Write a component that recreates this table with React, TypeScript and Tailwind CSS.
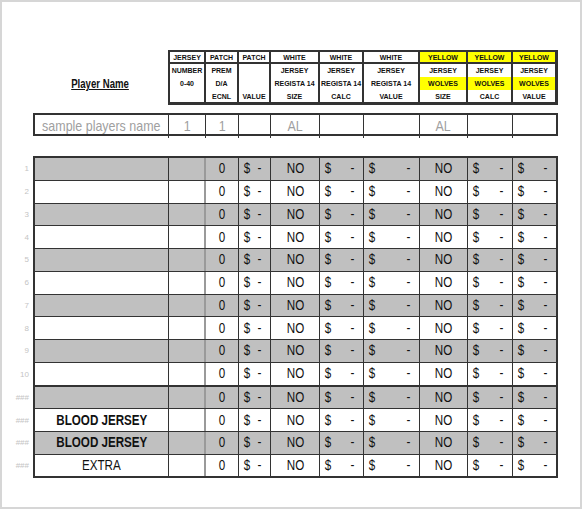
import React from "react";

const sans = "font-['Liberation_Sans',Arial,sans-serif]";
const gridCols = "grid grid-cols-[134px_37px_33px_32px_49px_44px_56px_48px_45px_43px]";
const headCols = "grid grid-cols-[36px_33px_32px_49px_44px_56px_48px_45px_42px]";

type Head = { top: string; lines: [string, string, string]; yellow?: boolean };

const heads: Head[] = [
  { top: "JERSEY", lines: ["NUMBER", "0-40", ""] },
  { top: "PATCH", lines: ["PREM", "D/A", "ECNL"] },
  { top: "PATCH", lines: ["", "", "VALUE"] },
  { top: "WHITE", lines: ["JERSEY", "REGISTA 14", "SIZE"] },
  { top: "WHITE", lines: ["JERSEY", "REGISTA 14", "CALC"] },
  { top: "WHITE", lines: ["JERSEY", "REGISTA 14", "VALUE"] },
  { top: "YELLOW", lines: ["JERSEY", "WOLVES", "SIZE"], yellow: true },
  { top: "YELLOW", lines: ["JERSEY", "WOLVES", "CALC"], yellow: true },
  { top: "YELLOW", lines: ["JERSEY", "WOLVES", "VALUE"], yellow: true },
];

const rows = [
  { label: "1", name: "" },
  { label: "2", name: "" },
  { label: "3", name: "" },
  { label: "4", name: "" },
  { label: "5", name: "" },
  { label: "6", name: "" },
  { label: "7", name: "" },
  { label: "8", name: "" },
  { label: "9", name: "" },
  { label: "10", name: "" },
  { label: "###", name: "" },
  { label: "###", name: "BLOOD JERSEY", bold: true },
  { label: "###", name: "BLOOD JERSEY", bold: true },
  { label: "###", name: "EXTRA" },
];

// condensed look (Arial Narrow isn't installed)
const N = ({ children }: { children: React.ReactNode }) => (
  <span className="inline-block whitespace-nowrap scale-x-[0.83]">{children}</span>
);

const Money = () => (
  <div className="w-full flex items-center justify-between pl-[4px] pr-[8px]">
    <N>$</N>
    <N>-</N>
  </div>
);

const App = () => {
  return (
    <div className={`w-[585px] h-[510px] bg-white ${sans} text-[#111]`}>
      <div className="w-[582px] h-[509px] border-2 border-[#d6d6d6] pt-[48px]">
        {/* header */}
        <div className="flex">
          <div className="w-[166px] pl-[31px] flex justify-center pt-[25px]">
            <span className="inline-block whitespace-nowrap scale-x-[0.8] text-[12px] font-bold underline">
              Player Name
            </span>
          </div>
          <div className="w-[390px] border-t-2 border-l-2 border-r-[3px] border-b-[3px] border-[#333]">
            <div className={`${headCols} border-b-2 border-[#333]`}>
              {heads.map((h, i) => (
                <div
                  key={i}
                  className={`h-[10px] flex items-center justify-center text-[7px] font-bold leading-none ${
                    i < heads.length - 1 ? "border-r-2 border-[#333]" : ""
                  } ${h.yellow ? "bg-[#ffff00]" : ""}`}
                >
                  {h.top}
                </div>
              ))}
            </div>
            <div className={headCols}>
              {heads.map((h, i) => (
                <div
                  key={i}
                  className={`flex flex-col text-[7px] font-bold leading-none ${
                    i < heads.length - 1 ? "border-r-2 border-[#333]" : ""
                  }`}
                >
                  <div className="h-[13px] flex items-center justify-center">{h.lines[0]}</div>
                  <div
                    className={`h-[13px] flex items-center justify-center ${h.yellow ? "bg-[#ffff00]" : ""}`}
                  >
                    {h.lines[1]}
                  </div>
                  <div className="h-[12px] flex items-center justify-center">{h.lines[2]}</div>
                </div>
              ))}
            </div>
          </div>
        </div>

        {/* sample row */}
        <div className="ml-[31px] mt-[8px] w-[525px] border-2 border-[#333] text-[#a0a0a0] text-[15px]">
          <div className={`${gridCols} h-[19px]`}>
            <div className="border-r border-[#333] flex items-center justify-center">
              <N>sample players name</N>
            </div>
            <div className="border-r border-[#333] flex items-center justify-center">
              <N>1</N>
            </div>
            <div className="border-r border-[#333] flex items-center justify-center">
              <N>1</N>
            </div>
            <div className="border-r border-[#333]" />
            <div className="border-r border-[#333] flex items-center justify-center">
              <N>AL</N>
            </div>
            <div className="border-r border-[#333]" />
            <div className="border-r border-[#333]" />
            <div className="border-r border-[#333] flex items-center justify-center">
              <N>AL</N>
            </div>
            <div className="border-r border-[#333]" />
            <div />
          </div>
        </div>

        {/* main table */}
        <div className="flex mt-[20px]">
          <div className="w-[31px] pt-[2px] flex flex-col text-[8px] text-[#c4c4c4]">
            {rows.map((r, i) => (
              <div
                key={i}
                className={`${i === 9 ? "h-[23.75px]" : "h-[22.75px]"} flex items-center justify-end pr-[4px]`}
              >
                {r.label}
              </div>
            ))}
          </div>
          <div className="w-[525px] border-l-2 border-t-2 border-r-2 border-[#333] text-[14px]">
            {rows.map((r, i) => {
              const gray = i % 2 === 0;
              const bottom = i === 9 || i === rows.length - 1 ? "border-b-2" : "border-b";
              return (
                <div
                  key={i}
                  className={`${gridCols} ${i === 9 ? "h-[23.75px]" : "h-[22.75px]"} ${bottom} border-[#333] ${
                    gray ? "bg-[#c0c0c0]" : "bg-white"
                  }`}
                >
                  <div
                    className={`border-r border-[#333] flex items-center justify-center ${
                      r.bold ? "font-bold" : ""
                    }`}
                  >
                    {r.name && <N>{r.name}</N>}
                  </div>
                  <div className="border-r-2 border-[#9a9a9a]" />
                  <div className="border-r border-[#333] flex items-center justify-center">
                    <N>0</N>
                  </div>
                  <div className="border-r border-[#333] flex items-center">
                    <Money />
                  </div>
                  <div className="border-r border-[#333] flex items-center justify-center">
                    <N>NO</N>
                  </div>
                  <div className="border-r border-[#333] flex items-center">
                    <Money />
                  </div>
                  <div className="border-r border-[#333] flex items-center">
                    <Money />
                  </div>
                  <div className="border-r border-[#333] flex items-center justify-center">
                    <N>NO</N>
                  </div>
                  <div className="border-r border-[#333] flex items-center">
                    <Money />
                  </div>
                  <div className="flex items-center">
                    <Money />
                  </div>
                </div>
              );
            })}
          </div>
        </div>
      </div>
    </div>
  );
};

export default App;
